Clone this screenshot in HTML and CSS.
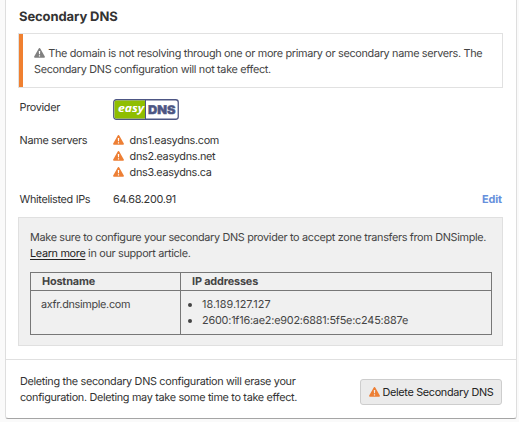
FILE: index.html
```html
<!DOCTYPE html>
<html lang="en">
<head>
<meta charset="utf-8">
<title>Secondary DNS</title>
<link rel="stylesheet" href="styles.css">
</head>
<body>
<svg width="0" height="0" class="defs" aria-hidden="true">
  <symbol id="warning" viewBox="0 0 11 10"><path fill="currentColor" fill-rule="evenodd" d="M4.75.5Q5.5-.6 6.25.5L10.8 8.5Q11.3 9.7 10 9.8H1Q-.3 9.7.2 8.5ZM4.8 3.1 5 6.3H6L6.2 3.1ZM4.9 7.2V8.4H6.1V7.2Z"/></symbol>
</svg>
<main class="card">
  <section class="main">
    <h1>Secondary DNS</h1>
    <div class="alert"><p><svg class="icon muted"><use href="#warning"/></svg> The domain is not resolving through one or more primary or secondary name servers. The<br>Secondary DNS configuration will not take effect.</p></div>
    <dl>
      <div class="row provider">
        <dt>Provider</dt>
        <dd>
          <svg class="logo" viewBox="0 0 66 21" role="img" aria-label="easyDNS">
            <rect x=".75" y=".75" width="64.5" height="19.5" rx="2.5" fill="#fff" stroke="#4d5684" stroke-width="1.3"/>
            <path fill="#8fbe00" d="M3 1.5H32V19.5H3Q1.5 19.5 1.5 18V3Q1.5 1.5 3 1.5Z"/>
            <path stroke="#4d5684" d="M32.5 1V20"/>
            <text class="easy" x="5" y="13" textLength="26" lengthAdjust="spacingAndGlyphs">easy</text>
            <text class="dns" x="35" y="15" textLength="27.5" lengthAdjust="spacingAndGlyphs">DNS</text>
          </svg>
        </dd>
      </div>
      <div class="row servers">
        <dt>Name servers</dt>
        <dd>
          <ul>
            <li><svg class="icon"><use href="#warning"/></svg>dns1.easydns.com</li>
            <li><svg class="icon"><use href="#warning"/></svg>dns2.easydns.net</li>
            <li><svg class="icon"><use href="#warning"/></svg>dns3.easydns.ca</li>
          </ul>
        </dd>
      </div>
      <div class="row">
        <dt>Whitelisted IPs</dt>
        <dd>64.68.200.91</dd>
        <dd class="edit"><a href="#">Edit</a></dd>
      </div>
    </dl>
    <div class="note">
      <p>Make sure to configure your secondary DNS provider to accept zone transfers from DNSimple.<br><a href="#">Learn more</a> in our support article.</p>
      <table>
        <thead><tr><th>Hostname</th><th>IP addresses</th></tr></thead>
        <tbody><tr><td>axfr.dnsimple.com</td><td><ul><li>18.189.127.127</li><li>2600:1f16:ae2:e902:6881:5f5e:c245:887e</li></ul></td></tr></tbody>
      </table>
    </div>
  </section>
  <footer>
    <p>Deleting the secondary DNS configuration will erase your<br>configuration. Deleting may take some time to take effect.</p>
    <button type="button"><svg class="icon"><use href="#warning"/></svg>Delete Secondary DNS</button>
  </footer>
</main>
</body>
</html>
```
FILE: styles.css
```css
* { box-sizing: border-box; }
body {
  margin: 0;
  height: 422px;
  overflow: hidden;
  background: #fafafa;
  color: #333;
  font: 10.85px/16px Inter, "Liberation Sans", sans-serif;
  letter-spacing: -.32px;
  text-rendering: geometricPrecision;
  white-space: nowrap;
}
h1, p, dl, dd, ul { margin: 0; padding: 0; }
.defs { position: absolute; }
.card {
  width: 512px;
  height: 419px;
  margin-left: 5px;
  background: #fff;
  border: 1px solid #dedede;
  border-top: 0;
  border-bottom-color: #a5a5a5;
  border-radius: 0 0 3px 3px;
}
.main {
  height: 360px;
  padding: 8px 13px 0 12px;
  border-bottom: 1px solid #e0e0e0;
}
h1 { margin-left: 1px; font-size: 13px; line-height: 18px; font-weight: 700; letter-spacing: -.1px; }
.alert {
  display: flex;
  height: 55px;
  margin-top: 7px;
  border: 1px solid #e1e1e1;
  color: #444;
}
.alert::before { content: ""; flex: none; width: 4px; background: #f08030; }
.alert p { padding: 11px 0 0 11px; }
.icon { width: 11px; height: 10px; color: #ed7f35; flex: none; }
.muted { margin-right: .5px; color: #808080; vertical-align: -1px; }
dl { margin: 11px 1px 0 1px; }
.row { display: flex; }
dt { width: 94px; padding-left: .6px; }
.provider { height: 33px; }
.servers { height: 59px; }
.logo { display: block; width: 66px; height: 21px; letter-spacing: 0; }
.easy { font: italic 700 11px "Noto Sans", sans-serif; fill: #fff; }
.dns { font: 900 12px Inter, sans-serif; fill: #4d5684; stroke: #4d5684; stroke-width: .4px; }
.servers ul { list-style: none; }
.servers li { display: flex; align-items: center; gap: 5.6px; }
.edit { margin-left: auto; font-weight: 700; letter-spacing: -.1px; }
.edit a { color: #6690dc; text-decoration: none; }
.note {
  height: 129px;
  margin-top: 10px;
  padding: 11px;
  background: #f0f0f0;
  border: 1px solid #e0e0e0;
  color: #444;
}
.note p a { color: #222; text-underline-offset: 2px; }
table {
  width: 462px;
  margin-top: 11px;
  table-layout: fixed;
  border-collapse: collapse;
}
th, td { border: 1px solid #777; text-align: left; vertical-align: top; }
th { height: 18px; padding: 0 11px; font-weight: 700; letter-spacing: -.15px; }
th:first-child { width: 150px; }
td { height: 44px; padding: 5px 10px; }
td ul { padding-left: 11px; letter-spacing: -.2px; }
td li:first-child { letter-spacing: .05px; }
footer {
  display: flex;
  justify-content: space-between;
  height: 58px;
  padding: 13px 14px 0;
}
button {
  display: flex;
  align-items: center;
  justify-content: center;
  gap: 3px;
  width: 142px;
  height: 26px;
  margin-top: 6px;
  padding: 0;
  font: inherit;
  letter-spacing: inherit;
  color: #222;
  background: #ebebeb;
  border: 1px solid #cdcdcd;
  border-radius: 3px;
}
```
